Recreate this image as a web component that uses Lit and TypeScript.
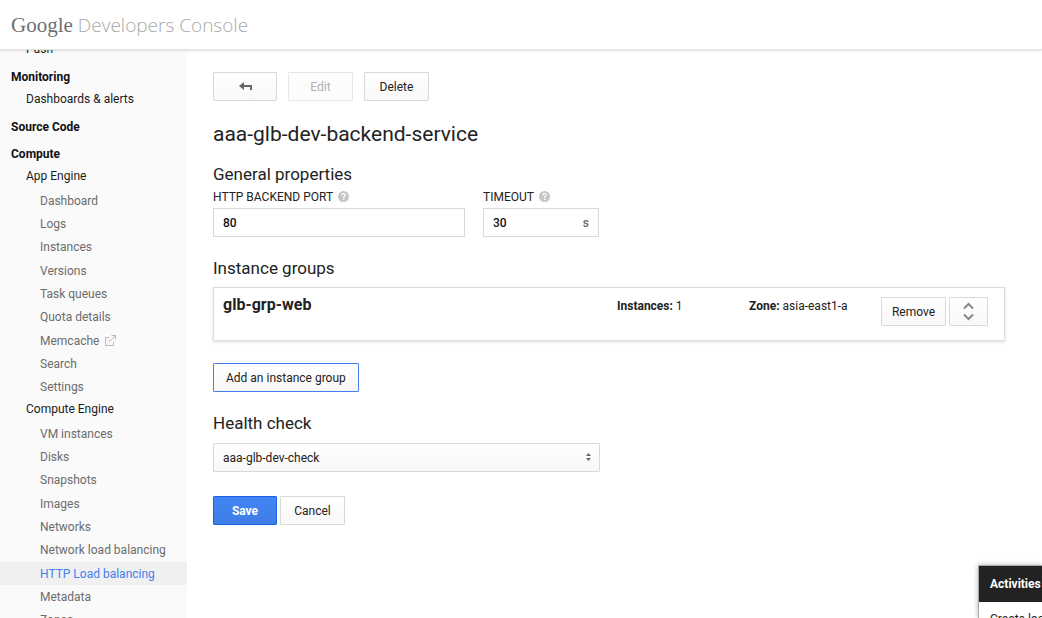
import { LitElement, html, css, nothing } from "lit";
import { customElement, property } from "lit/decorators.js";

interface NavItem {
  label: string;
  external?: boolean;
  active?: boolean;
}
interface NavGroup {
  label: string;
  items: NavItem[];
}
interface NavSection {
  title?: string;
  groups: NavGroup[];
}

const NAV: NavSection[] = [
  { groups: [{ label: "Push", items: [] }] },
  { title: "Monitoring", groups: [{ label: "Dashboards & alerts", items: [] }] },
  { title: "Source Code", groups: [] },
  {
    title: "Compute",
    groups: [
      {
        label: "App Engine",
        items: [
          { label: "Dashboard" },
          { label: "Logs" },
          { label: "Instances" },
          { label: "Versions" },
          { label: "Task queues" },
          { label: "Quota details" },
          { label: "Memcache", external: true },
          { label: "Search" },
          { label: "Settings" },
        ],
      },
      {
        label: "Compute Engine",
        items: [
          { label: "VM instances" },
          { label: "Disks" },
          { label: "Snapshots" },
          { label: "Images" },
          { label: "Networks" },
          { label: "Network load balancing" },
          { label: "HTTP Load balancing", active: true },
          { label: "Metadata" },
          { label: "Zones" },
        ],
      },
    ],
  },
];

@customElement("console-nav")
class ConsoleNav extends LitElement {
  static styles = css`
    :host {
      display: block;
      overflow: hidden;
      background: #fafafa;
      font-size: 12px;
    }
    .scroller {
      margin-top: -12px;
    }
    ul {
      list-style: none;
      margin: 0;
      padding: 0;
    }
    .section + .section {
      margin-top: 5px;
    }
    .title {
      margin: 0;
      padding-left: 11px;
      font-size: 12px;
      line-height: 22px;
      font-weight: 700;
      color: #111;
    }
    a {
      display: flex;
      align-items: center;
      gap: 6px;
      height: 23px;
      text-decoration: none;
      white-space: nowrap;
    }
    .group {
      height: 22px;
      padding: 0 0 1px 26px;
      color: #1c1c1c;
    }
    .item {
      padding-left: 40px;
      color: #6c6c6c;
    }
    .items li:nth-child(3n + 1) {
      margin-top: 1px;
    }
    .active {
      background: #f0f0f0;
      color: #427fed;
    }
  `;

  render() {
    return html`<nav class="scroller" aria-label="Console">
      ${NAV.map(
        (section) => html`<section class="section">
          ${section.title ? html`<h2 class="title">${section.title}</h2>` : nothing}
          ${section.groups.map(
            (group) => html`<a class="group" href="#">${group.label}</a>
              <ul class="items">
                ${group.items.map(
                  (item) => html`<li>
                    <a class="item ${item.active ? "active" : ""}" href="#"
                      >${item.label}${item.external
                        ? html`<svg width="11" height="11" viewBox="0 0 11 11" fill="none" stroke="#b8b8b8" aria-hidden="true">
                            <path d="M4 2.5H.5v8h8V7M6.5.5h4v4M10.5.5L4 7" />
                          </svg>`
                        : nothing}</a
                    >
                  </li>`
                )}
              </ul>`
          )}
        </section>`
      )}
    </nav>`;
  }
}

@customElement("help-dot")
class HelpDot extends LitElement {
  @property() topic = "";
  static styles = css`
    :host {
      display: inline-flex;
      padding-bottom: 2px;
    }
    .dot {
      width: 11px;
      height: 11px;
      padding: 0;
      border: 0;
      background: none;
      display: flex;
    }
  `;
  render() {
    return html`<button class="dot" type="button" aria-label="Help: ${this.topic}">
      <svg width="11" height="11" viewBox="0 0 11 11" aria-hidden="true">
        <circle cx="5.5" cy="5.5" r="5.5" fill="#c6c6c6" />
        <path d="M3.8 4.2C3.8 2 7.3 2.1 7.2 4.1C7.2 5.2 5.6 5.3 5.6 6.7" fill="none" stroke="#fff" stroke-width="1.3" />
        <rect x="4.9" y="7.6" width="1.4" height="1.4" fill="#fff" />
      </svg>
    </button>`;
  }
}

@customElement("app-root")
class AppRoot extends LitElement {
  static styles = css`
    :host {
      display: flex;
      flex-direction: column;
      position: relative;
      height: 100vh;
      overflow: hidden;
      background: #fff;
      color: #222;
      font-family: Roboto, "Liberation Sans", sans-serif;
      font-size: 12px;
    }
    * {
      box-sizing: border-box;
    }
    .top {
      display: flex;
      align-items: center;
      gap: 5px;
      height: 50px;
      flex: none;
      padding-left: 11px;
      background: #fff;
      border-bottom: 1px solid #e2e2e2;
      box-shadow: 0 1px 2px rgba(0, 0, 0, 0.12);
      z-index: 1;
    }
    .brand {
      font: 21px/28px "Liberation Serif", serif;
      color: #6c7073;
    }
    .product {
      font: 300 19px/28px "Open Sans", sans-serif;
      color: #a8a8a8;
    }
    .body {
      flex: 1;
      min-height: 0;
      display: grid;
      grid-template-columns: 187px 1fr;
    }
    main {
      padding: 22px 37px 0 26px;
      overflow: hidden;
    }
    .row {
      display: flex;
      gap: 11px;
    }
    .tight {
      gap: 3px;
    }
    .btn {
      height: 29px;
      min-width: 65px;
      padding: 0 9px;
      display: inline-flex;
      align-items: center;
      justify-content: center;
      font: 12px/16px Roboto, "Liberation Sans", sans-serif;
      color: #222;
      border: 1px solid #d9d9d9;
      border-radius: 1px;
      background: linear-gradient(#fff, #f8f8f8);
      white-space: nowrap;
    }
    .btn:disabled {
      color: #b0b0b0;
      border-color: #e6e6e6;
      background: #fcfcfc;
    }
    .narrow {
      min-width: 39px;
    }
    .first {
      min-width: 64px;
    }
    .outlined {
      padding: 0 12px;
      border-color: #427fed;
    }
    .primary {
      color: #fff;
      font-weight: 700;
      border-color: #1b63e4;
      background: linear-gradient(#4285f4, #3f7de6);
    }
    h1 {
      margin: 19px 0 0;
      font-size: 21px;
      line-height: 28px;
      font-weight: 400;
    }
    h2 {
      margin: 0;
      font-size: 17px;
      line-height: 24px;
      font-weight: 400;
    }
    .fields {
      display: flex;
      gap: 18px;
    }
    .head {
      display: flex;
      gap: 5px;
      align-items: center;
      height: 22px;
      text-transform: uppercase;
    }
    .control {
      display: flex;
      align-items: center;
      width: 252px;
      height: 29px;
      padding: 0 9px;
      border: 1px solid #d9d9d9;
      background: #fff;
    }
    .short {
      width: 116px;
    }
    .control input {
      flex: 1;
      min-width: 0;
      padding: 0;
      border: 0;
      outline: 0;
      background: none;
      font: 500 12px/16px Roboto, sans-serif;
      color: #111;
    }
    .unit {
      color: #666;
      font-weight: 500;
    }
    .block {
      margin-top: 19px;
    }
    .general {
      margin-top: 14px;
    }
    .card {
      display: grid;
      grid-template-columns: 1fr 132px 132px auto;
      margin-top: 7px;
      padding: 9px 16px 14px 9px;
      border: 1px solid #ddd;
      box-shadow: 0 1px 3px rgba(0, 0, 0, 0.14);
    }
    .name {
      margin: 0;
      font-size: 16px;
      line-height: 16px;
      font-weight: 700;
    }
    .fact {
      line-height: 18px;
    }
    .add {
      margin-top: 22px;
    }
    .picker {
      position: relative;
      width: 387px;
      max-width: 100%;
      margin-top: 8px;
    }
    .picker select {
      display: block;
      appearance: none;
      width: 100%;
      height: 29px;
      padding: 0 24px 0 9px;
      border: 1px solid #d9d9d9;
      border-radius: 1px;
      background: linear-gradient(#fff, #f8f8f8);
      font: 12px/16px Roboto, sans-serif;
      color: #222;
    }
    .picker svg {
      position: absolute;
      right: 9px;
      top: 10px;
      pointer-events: none;
    }
    .actions {
      margin-top: 24px;
    }
    .activities {
      position: absolute;
      right: 0;
      bottom: 0;
      width: 64px;
      height: 53px;
      overflow: hidden;
      white-space: nowrap;
      background: #fff;
      border: solid #aaa;
      border-width: 1px 0 0 1px;
      box-shadow: 0 0 5px rgba(0, 0, 0, 0.3);
      z-index: 2;
    }
    .activities h2 {
      padding-left: 11px;
      background: #222;
      color: #fff;
      font-size: 12px;
      line-height: 36px;
      font-weight: 700;
    }
    .activities p {
      margin: 0;
      padding: 8px 0 0 11px;
      line-height: 18px;
    }
  `;

  render() {
    return html`
      <header class="top">
        <span class="brand">Google</span><span class="product">Developers Console</span>
      </header>
      <div class="body">
        <console-nav></console-nav>
        <main>
          <div class="row">
            <button class="btn first" type="button" aria-label="Back">
              <svg width="13" height="9" viewBox="0 0 13 9" aria-hidden="true">
                <path d="M0 4L5 0V3H13V8H11V5H5V8Z" fill="#666" />
              </svg>
            </button>
            <button class="btn" type="button" disabled>Edit</button>
            <button class="btn" type="button">Delete</button>
          </div>
          <h1>aaa-glb-dev-backend-service</h1>

          <section class="block general">
            <h2>General properties</h2>
            <div class="fields">
              <div>
                <div class="head">
                  <label for="port">HTTP backend port</label><help-dot topic="port"></help-dot>
                </div>
                <div class="control"><input id="port" type="text" .value=${"80"} /></div>
              </div>
              <div>
                <div class="head">
                  <label for="timeout">Timeout</label><help-dot topic="timeout"></help-dot>
                </div>
                <div class="control short">
                  <input id="timeout" type="text" .value=${"30"} /><span class="unit">s</span>
                </div>
              </div>
            </div>
          </section>

          <section class="block">
            <h2>Instance groups</h2>
            <article class="card">
              <h3 class="name">glb-grp-web</h3>
              <span class="fact"><b>Instances:</b> 1</span>
              <span class="fact"><b>Zone:</b> asia-east1-a</span>
              <div class="row tight">
                <button class="btn" type="button">Remove</button>
                <button class="btn narrow" type="button" aria-label="Expand">
                  <svg width="11" height="19" viewBox="0 0 11 19" fill="none" stroke="#888" stroke-width="2" aria-hidden="true">
                    <path d="M1 6.5L5.500 2L10 6.500M1 12.500L5.500 17L10 12.500" />
                  </svg>
                </button>
              </div>
            </article>
            <button class="btn outlined add" type="button">Add an instance group</button>
          </section>

          <section class="block">
            <h2><label for="check">Health check</label></h2>
            <div class="picker">
              <select id="check">
                <option>aaa-glb-dev-check</option>
              </select>
              <svg width="5" height="8" viewBox="0 0 5 8" fill="#666" aria-hidden="true">
                <path d="M0 3L2.5 0L5 3ZM0 5H5L2.5 8Z" />
              </svg>
            </div>
          </section>

          <div class="row tight actions">
            <button class="btn first primary" type="button">Save</button>
            <button class="btn" type="button">Cancel</button>
          </div>
        </main>
      </div>
      <aside class="activities">
        <h2>Activities</h2>
        <p>Create load balancer</p>
      </aside>
    `;
  }
}
